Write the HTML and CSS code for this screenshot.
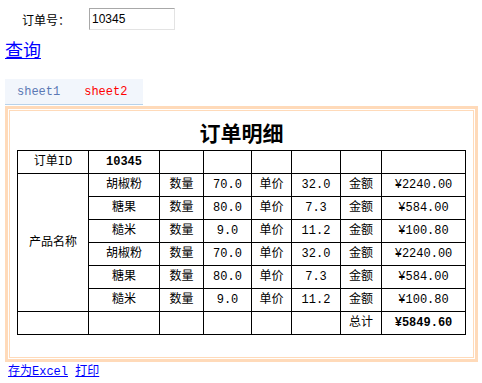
FILE: index.html
```html
<!DOCTYPE html>
<html>
<head>
<meta charset="utf-8">
<link rel="stylesheet" href="styles.css">
</head>
<body>
<div class="search">
  <span class="label">订单号：</span>
  <input class="order-input" type="text" value="10345">
</div>
<div class="query-row"><a class="query" href="#">查询</a></div>
<div class="tabs">
  <span class="tab">sheet1</span>
  <span class="tab active">sheet2</span>
</div>
<div class="frame">
  <div class="frame-inner">
    <div class="title">订单明细</div>
    <table class="detail">
      <colgroup>
        <col class="c71"><col class="c71"><col class="c44"><col class="c48">
        <col class="c40"><col class="c49"><col class="c41"><col class="c84">
      </colgroup>
      <tr><td>订单ID</td><td class="b">10345</td><td></td><td></td><td></td><td></td><td></td><td></td></tr>
      <tr><td rowspan="6">产品名称</td><td>胡椒粉</td><td>数量</td><td>70.0</td><td>单价</td><td>32.0</td><td>金额</td><td>¥2240.00</td></tr>
      <tr><td>糖果</td><td>数量</td><td>80.0</td><td>单价</td><td>7.3</td><td>金额</td><td>¥584.00</td></tr>
      <tr><td>糙米</td><td>数量</td><td>9.0</td><td>单价</td><td>11.2</td><td>金额</td><td>¥100.80</td></tr>
      <tr><td>胡椒粉</td><td>数量</td><td>70.0</td><td>单价</td><td>32.0</td><td>金额</td><td>¥2240.00</td></tr>
      <tr><td>糖果</td><td>数量</td><td>80.0</td><td>单价</td><td>7.3</td><td>金额</td><td>¥584.00</td></tr>
      <tr><td>糙米</td><td>数量</td><td>9.0</td><td>单价</td><td>11.2</td><td>金额</td><td>¥100.80</td></tr>
      <tr><td></td><td></td><td></td><td></td><td></td><td></td><td>总计</td><td class="b">¥5849.60</td></tr>
    </table>
  </div>
</div>
<div class="actions">
  <a href="#">存为Excel</a>
  <a href="#">打印</a>
</div>
</body>
</html>
```
FILE: styles.css
```css
body {
  margin: 0;
  font-family: "Liberation Mono", "Noto Sans CJK SC", monospace;
  font-size: 12px;
  color: #000;
  background: #fff;
}
.search {
  display: flex;
  align-items: center;
  padding: 8px 0 0 22px;
  height: 22px;
}
.label {
  width: 67px;
  font-family: "Noto Sans CJK SC", sans-serif;
  font-size: 12px;
}
.order-input {
  box-sizing: border-box;
  width: 86px;
  height: 22px;
  margin: 0;
  padding: 0 2px;
  border: 1px solid #e3e3e3;
  border-top-color: #a8a8a8;
  border-left-color: #a8a8a8;
  font-family: "Liberation Sans", sans-serif;
  font-size: 12px;
  color: #000;
  outline: none;
}
.query-row {
  display: flex;
  margin: 9px 0 0 5px;
  height: 20px;
}
.query {
  font-family: "Noto Sans CJK SC", sans-serif;
  font-size: 18px;
  line-height: 20px;
  color: #0000ff;
}
.tabs {
  display: flex;
  align-items: center;
  gap: 24px;
  box-sizing: border-box;
  margin: 20px 0 0 5px;
  padding-left: 12px;
  width: 138px;
  height: 26px;
  background: #f2f6fc;
  border-bottom: 1px solid #b8d2ea;
}
.tab {
  color: #5b78b4;
  font-size: 12px;
}
.tab.active {
  color: #ff0000;
}
.frame {
  box-sizing: border-box;
  width: 473px;
  margin: 1px 0 0 5px;
  border: 3px solid #ffdab9;
  padding: 1px;
}
.frame-inner {
  border: 1px solid #ffdab9;
  padding: 8px 7px 22px 7px;
}
.title {
  height: 28px;
  line-height: 27px;
  margin-bottom: 3px;
  text-align: center;
  font-family: "Noto Sans CJK SC", sans-serif;
  font-weight: bold;
  font-size: 21px;
}
.detail {
  table-layout: fixed;
  border-collapse: collapse;
  width: 449px;
}
.c71 { width: 71px; }
.c44 { width: 44px; }
.c48 { width: 48px; }
.c40 { width: 40px; }
.c49 { width: 49px; }
.c41 { width: 41px; }
.c84 { width: 84px; }
.detail td {
  border: 1px solid #000;
  height: 22px;
  padding: 0;
  text-align: center;
  font-size: 12px;
  line-height: 14px;
}
.detail td.b {
  font-weight: bold;
}
.actions {
  margin: 2px 0 0 8px;
  font-size: 12px;
  line-height: 16px;
}
.actions a {
  color: #0000ff;
}
```
